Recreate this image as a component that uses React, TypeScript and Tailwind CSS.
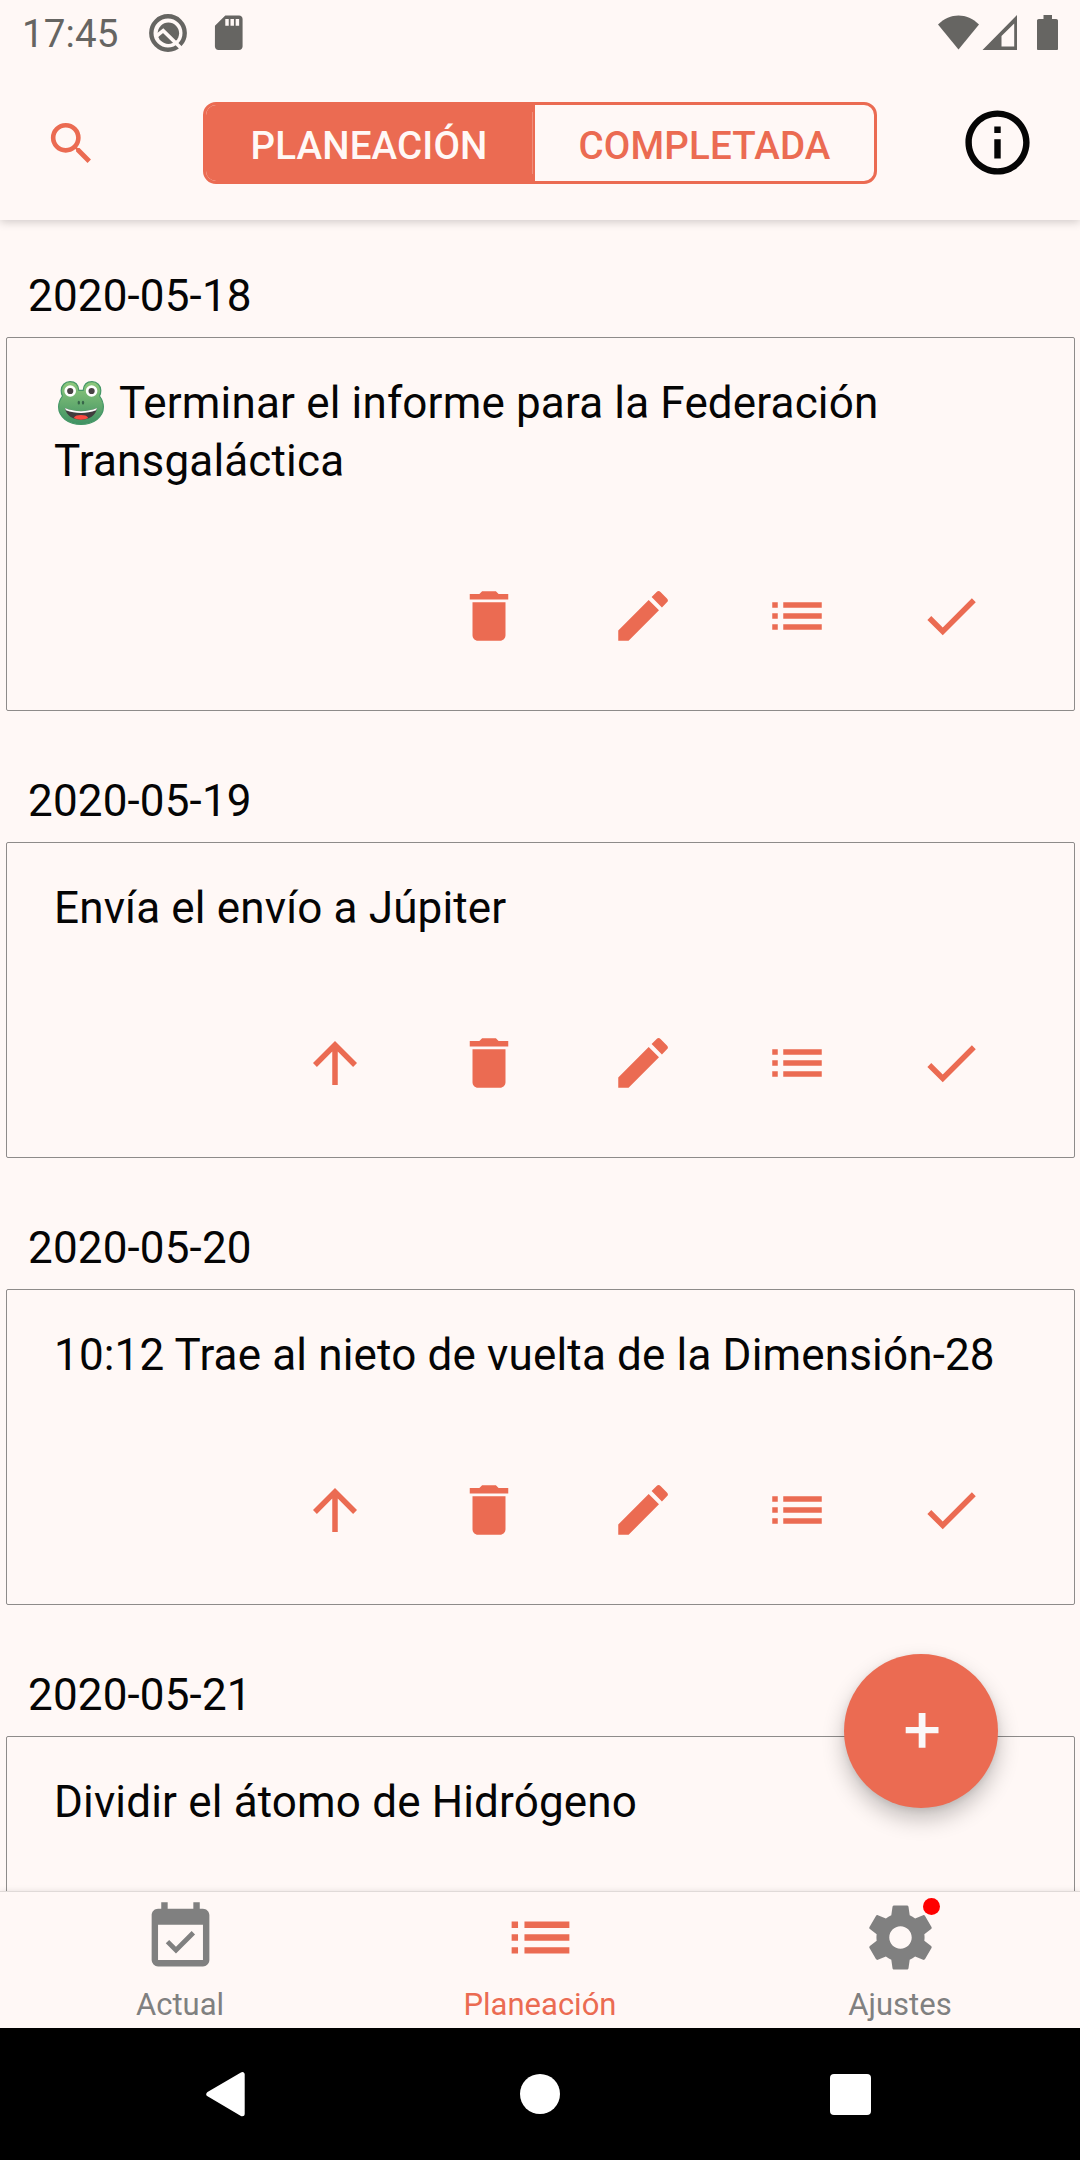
import React from "react";
import { MdSearch, MdInfoOutline, MdDelete, MdEdit, MdList, MdCheck, MdArrowUpward, MdEventAvailable } from "react-icons/md";

type Task = { date: string; title: string; frog?: boolean; movable?: boolean };

const tasks: Task[] = [
  { date: "2020-05-18", title: "Terminar el informe para la Federación Transgaláctica", frog: true },
  { date: "2020-05-19", title: "Envía el envío a Júpiter", movable: true },
  { date: "2020-05-20", title: "10:12 Trae al nieto de vuelta de la Dimensión-28", movable: true },
  { date: "2020-05-21", title: "Dividir el átomo de Hidrógeno", movable: true },
];

function Frog() {
  return (
    <svg viewBox="0 0 46 44" className="mr-[15px] ml-[4px] inline-block h-[44px] w-[46px] align-[-7px]">
      <defs>
        <linearGradient id="frogSkin" x1="0" y1="0" x2="0" y2="1">
          <stop offset="0" stopColor="#8fc97c" />
          <stop offset="1" stopColor="#3f9163" />
        </linearGradient>
      </defs>
      <path
        d="M12 .7C17 .7 20.300 4 20.800 9.300h4.400C25.700 4 29 .7 34 .7c5 0 8.800 3.800 8.800 8.800 0 2.200-.4 4-1.300 5.500 2.500 3.500 3.900 7 3.900 10.800C45.400 36 35.500 43.400 23 43.400S.6 36 .6 25.800C.6 22 2 18.500 4.500 15c-.9-1.500-1.300-3.300-1.300-5.500C3.200 4.500 7 .7 12 .7z"
        fill="url(#frogSkin)"
        stroke="#459767"
        strokeWidth="1.200"
      />
      <circle cx="12.200" cy="10" r="5.800" fill="#fff" />
      <circle cx="33.600" cy="10" r="5.800" fill="#fff" />
      <circle cx="12.200" cy="10" r="3.100" fill="#484344" />
      <circle cx="33.600" cy="10" r="3.100" fill="#484344" />
      <ellipse cx="20.800" cy="21.700" rx="1.200" ry="1.900" fill="#37654a" />
      <ellipse cx="25" cy="21.700" rx="1.200" ry="1.900" fill="#37654a" />
      <path d="M7 27c10 4.200 22 4.200 32 0-1 7.500-8 11.700-16 11.700S8 34.500 7 27z" fill="#413c3e" />
      <path d="M7 27c10 4.200 22 4.200 32 0l-.9 2.200c-9.600 3.600-20.600 3.600-30.200 0z" fill="#fff" />
      <path d="M15.800 37c1-2.400 4-3 7.200-3s6.200.6 7.200 3c-4.500 2.300-9.900 2.300-14.400 0z" fill="#fb4a41" />
    </svg>
  );
}

function StatusBar() {
  return (
    <div className="flex h-[66px] items-start pt-[12px] pr-[22px] pl-[22px] text-[#666562]">
      <span className="w-[125px] text-[38.500px] leading-[44px] tracking-[0.1px]">17:45</span>
      <svg viewBox="0 0 42 42" className="h-[42px] w-[42px]" fill="none">
        <circle cx="21" cy="21" r="16.700" stroke="currentColor" strokeWidth="4.400" />
        <circle cx="21.400" cy="21.200" r="10.700" fill="currentColor" />
        <path d="M9.500 24l6.700-5.300L37 39" stroke="#fff8f6" strokeWidth="3.600" />
      </svg>
      <svg viewBox="0 0 24 24" className="ml-[19px] h-[41.500px] w-[41.500px]" fill="currentColor">
        <path d="M18 2h-8L4.020 8 4 20c0 1.100.9 2 2 2h12c1.100 0 2-.9 2-2V4c0-1.100-.9-2-2-2zm-6 6h-2V4h2v4zm3 0h-2V4h2v4zm3 0h-2V4h2v4z" />
      </svg>
      <div className="ml-auto flex">
        <svg viewBox="0 0 120 38" className="h-[38px] w-[120px]" fill="currentColor">
          <path d="M0 12.400C12 .4 29 .4 41 12.400L20.500 37.500z" />
          <path d="M79 3v35H44.500zM76.200 11.500L63.500 24v10.500h12.700z" fillRule="evenodd" />
          <path d="M105.500 3h8.500v4h4.200c1 0 1.800.8 1.800 1.800v27.900c0 1-.8 1.800-1.800 1.800h-17.400c-1 0-1.800-.8-1.800-1.800V8.800c0-1 .8-1.800 1.800-1.800h4.700z" />
        </svg>
      </div>
    </div>
  );
}

function Header() {
  return (
    <header className="relative z-10 h-[220px] bg-[#fff8f6] shadow-[0_2px_9px_rgba(0,0,0,0.19)]">
      <StatusBar />
      <div className="flex h-[154px] items-start pr-[44px] pl-[44px]">
        <MdSearch className="mt-[50px] h-[55px] w-[55px] text-[#eb6b52]" />
        <div className="mt-[36px] ml-[104px] flex h-[82px] w-[674px] overflow-hidden rounded-[13px] border-[3px] border-[#eb6b52] text-[38.500px] leading-[81px] font-medium tracking-[0.180px]">
          <div className="relative w-[329px] bg-[#eb6b52] pr-[3px] text-center text-[#fff8f6]">
            PLANEACIÓN
            <span className="absolute top-[7px] right-[2px] h-[62px] w-px bg-[#f08f7b]" />
          </div>
          <div className="grow text-center text-[#eb6b52]">COMPLETADA</div>
        </div>
        <MdInfoOutline className="mt-[38px] ml-auto h-[77px] w-[77px] text-[#050505]" />
      </div>
    </header>
  );
}

function TaskCard({ task }: { task: Task }) {
  return (
    <section className="mb-[61px]">
      <h2 className="pl-[28px] text-[44px] leading-[58px] tracking-[0.150px]">{task.date}</h2>
      <div className="mt-[12px] mr-[5px] ml-[6px] rounded-[2px] border border-[#8e8b8a] pt-[36px] pr-[46px] pb-[76px]">
        <p className="pl-[47px] text-[44px] leading-[58px] tracking-[0.160px]">
          {task.frog && <Frog />}
          {task.title}
        </p>
        <div className="mt-[108px] flex h-[36px] items-center justify-end text-[66px] text-[#eb6b52]">
          {task.movable && <div className="flex w-[154px] justify-center"><MdArrowUpward /></div>}
          <div className="flex w-[154px] justify-center"><MdDelete /></div>
          <div className="flex w-[154px] justify-center"><MdEdit /></div>
          <div className="flex w-[154px] justify-center"><MdList /></div>
          <div className="flex w-[154px] justify-center"><MdCheck /></div>
        </div>
      </div>
    </section>
  );
}

function Gear() {
  return (
    <svg viewBox="0 0 24 24" className="h-[77px] w-[77px]" fill="currentColor">
      <path d="M19.430 12.980c.04-.32.07-.64.07-.98s-.03-.66-.07-.98l2.110-1.650c.19-.15.24-.42.12-.64l-2-3.460c-.12-.22-.39-.3-.61-.22l-2.490 1c-.52-.4-1.080-.73-1.690-.98l-.38-2.650C14.460 2.180 14.250 2 14 2h-4c-.25 0-.46.18-.49.42l-.38 2.650c-.61.25-1.170.59-1.690.98l-2.490-1c-.23-.09-.49 0-.61.22l-2 3.460c-.13.22-.07.49.12.64l2.110 1.650c-.04.32-.07.65-.07.98s.03.66.07.98l-2.110 1.650c-.19.15-.24.42-.12.64l2 3.460c.12.22.39.3.61.22l2.490-1c.52.4 1.080.73 1.690.98l.38 2.650c.03.24.24.42.49.42h4c.25 0 .46-.18.49-.42l.38-2.650c.61-.25 1.170-.59 1.690-.98l2.490 1c.23.09.49 0 .61-.22l2-3.460c.12-.22.07-.49-.12-.64l-2.110-1.650zM12 15.500c-1.930 0-3.500-1.570-3.500-3.500s1.570-3.500 3.500-3.500 3.500 1.570 3.500 3.500-1.570 3.500-3.500 3.500z" />
    </svg>
  );
}

function BottomNav() {
  return (
    <nav className="relative z-10 flex h-[137px] border-t border-[#e0dad8] bg-[#fff8f6] pt-[7px] text-[31px] leading-[36px] text-[#808080] shadow-[0_0_6px_rgba(0,0,0,0.1)]">
      <div className="flex w-[360px] flex-col items-center gap-[11px]">
        <MdEventAvailable className="h-[77px] w-[77px]" />
        <span>Actual</span>
      </div>
      <div className="flex w-[360px] flex-col items-center gap-[11px] text-[#eb6b52]">
        <MdList className="h-[77px] w-[77px]" />
        <span>Planeación</span>
      </div>
      <div className="flex w-[360px] flex-col items-center gap-[11px]">
        <div className="relative">
          <Gear />
          <span className="absolute -top-px right-[-1px] h-[17px] w-[17px] rounded-full bg-[#ff0000]" />
        </div>
        <span>Ajustes</span>
      </div>
    </nav>
  );
}

function SystemNav() {
  return (
    <div className="flex h-[132px] items-center justify-between bg-black pr-[209px] pl-[206px]">
      <svg viewBox="0 0 41 46" className="h-[46px] w-[41px]" fill="#fff" stroke="#fff" strokeWidth="5" strokeLinejoin="round">
        <path d="M2.800 23.200L36.200 3.600v39.200z" />
      </svg>
      <span className="ml-[3px] h-[40px] w-[40px] rounded-full bg-white" />
      <span className="mt-px h-[41px] w-[41px] rounded-[4px] bg-white" />
    </div>
  );
}

export default function App() {
  return (
    <div className="relative flex h-[2160px] w-[1080px] flex-col overflow-hidden bg-[#fff8f6] font-['Roboto',sans-serif] text-[#050505]">
      <Header />
      <main className="min-h-0 flex-1 overflow-hidden pt-[47px]">
        {tasks.map((task) => (
          <TaskCard key={task.date} task={task} />
        ))}
      </main>
      <BottomNav />
      <SystemNav />
      <button className="absolute right-[82px] bottom-[352px] flex h-[154px] w-[154px] items-center justify-center rounded-full bg-[#eb6b52] shadow-[0_11px_22px_rgba(0,0,0,0.24),0_2px_6px_rgba(0,0,0,0.08)]">
        <svg viewBox="0 0 34 36" className="ml-px h-[36px] w-[34px]" fill="#faf8f8">
          <path d="M13.700 0h6.800v14h13v6.200h-13v14.600h-6.800V20.200H.7V14h13z" />
        </svg>
      </button>
    </div>
  );
}
